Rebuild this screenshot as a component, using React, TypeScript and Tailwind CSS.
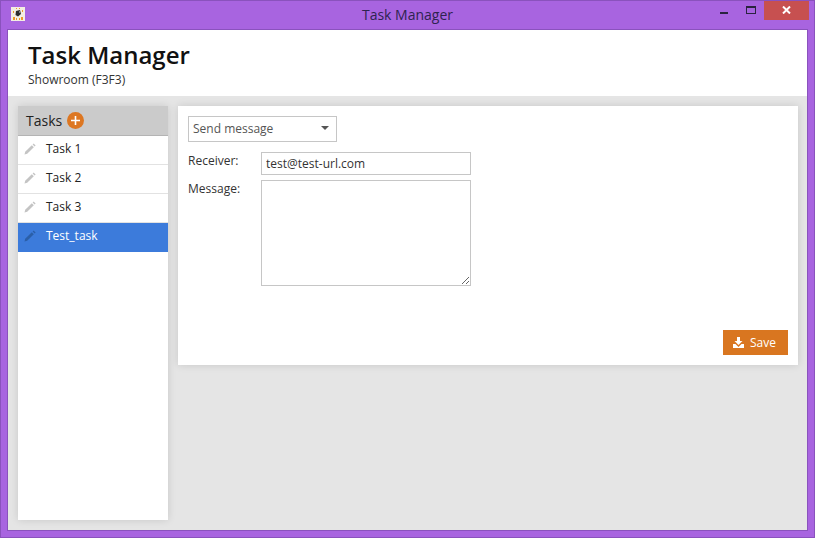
const tasks = ["Task 1", "Task 2", "Task 3", "Test_task"];

function PencilIcon({ dark }: { dark?: boolean }) {
  const c = dark ? "#2b5fa8" : "#c4c4c4";
  return (
    <svg width="12" height="12" viewBox="0 0 12 12" className="shrink-0">
      <path d="M0.5 11.5 L1.2 8.8 L7.8 2.2 L9.8 4.2 L3.2 10.8 Z" fill={c} />
      <path d="M8.6 1.4 L9.6 0.4 L11.6 2.4 L10.6 3.4 Z" fill={c} />
    </svg>
  );
}

function AppIcon() {
  return (
    <svg width="14" height="14" viewBox="0 0 14 14" className="absolute left-[10px] top-[6px]">
      <rect width="14" height="14" fill="#f3eee2" />
      <path d="M5 4 L9 3 L10 7 L7 9.5 L4.5 8 Z" fill="#2c2c2c" />
      <path d="M8 4 L9 5 L8 6 Z" fill="#d8d8d8" />
      <path d="M2 10 H4 V13 H2 Z M10 10 H12 V13 H10 Z M5 11 H6 V13 H5 Z M8 11 H9 V13 H8 Z M2 4 H3 V6 H2 Z M11 3 H12 V5 H11 Z M5 1 H6 V2 H5 Z M8 1 H9 V2 H8 Z" fill="#ec9a2a" />
    </svg>
  );
}

function TaskRow({ name, active }: { name: string; active: boolean }) {
  return (
    <div
      className={
        active
          ? "flex h-[29px] items-center gap-[10px] bg-[#3c7bdb] pl-[6px] pb-[3px] text-[12px] text-white"
          : "flex h-[29px] items-center gap-[10px] border-b border-[#e2e2e2] pl-[6px] pb-[2px] text-[12px] text-[#222]"
      }
    >
      <PencilIcon dark={active} />
      <span>{name}</span>
    </div>
  );
}

export default function App() {
  return (
    <div className="flex h-[538px] w-[815px] flex-col overflow-hidden border border-[#8a52bd] bg-[#a864e0] font-['Open_Sans',sans-serif]">
      {/* window title bar */}
      <div className="relative flex h-[28px] shrink-0 items-center justify-center pb-[1px] text-[14px] text-[#2e2350]">
        <span>Task Manager</span>
        <AppIcon />
        <div className="absolute right-[5px] top-[-1px] flex items-start">
          <div className="mr-[18px] mt-[12px] h-[2px] w-[8px] bg-[#2a2340]" />
          <div className="mr-[8px] mt-[6px] h-[8px] w-[10px] border border-t-2 border-[#2a2340]" />
          <div className="flex h-[20px] w-[45px] items-center justify-center bg-[#c75050]">
            <svg width="9" height="8" viewBox="0 0 9 8">
              <path d="M1 0.5 L8 7.5 M8 0.5 L1 7.5" stroke="#fff" strokeWidth="2" />
            </svg>
          </div>
        </div>
      </div>

      <div className="mx-[6px] flex min-h-0 flex-1 flex-col border border-[#8a52bd] bg-[#e5e5e5]">
        <header className="h-[66px] shrink-0 bg-white pl-[20px] pt-[10px] text-[#111]">
          <h1 className="text-[24px] leading-[30px] font-semibold">Task Manager</h1>
          <p className="mt-[3px] text-[12px] leading-[14px] text-[#333]">Showroom (F3F3)</p>
        </header>

        <div className="flex min-h-0 flex-1 items-start gap-[10px] py-[10px] pl-[10px] pr-[9px]">
          <aside className="flex h-[414px] w-[150px] shrink-0 flex-col bg-white shadow-[0_0_8px_rgba(0,0,0,0.13)]">
            <div className="flex h-[30px] items-center gap-[5px] border-b border-[#b4b4b4] bg-[#cbcbcb] pb-[1px] pl-[8px] text-[14px] text-[#222]">
              <span>Tasks</span>
              <span className="flex h-[17px] w-[17px] items-center justify-center rounded-full bg-[#dd7722]">
                <svg width="11" height="11" viewBox="0 0 11 11">
                  <path d="M5.5 1 V10 M1 5.5 H10" stroke="#fff" strokeWidth="1.6" />
                </svg>
              </span>
            </div>
            {tasks.map((t) => (
              <TaskRow key={t} name={t} active={t === "Test_task"} />
            ))}
          </aside>

          <main className="flex h-[259px] flex-1 flex-col bg-white p-[10px] shadow-[0_0_8px_rgba(0,0,0,0.13)]">
            <div className="flex h-[26px] w-[149px] items-center justify-between border border-[#c6c6c6] pl-[4px] pr-[7px] text-[12px] text-[#555]">
              <span>Send message</span>
              <span className="mb-[2px] h-0 w-0 border-x-[4px] border-t-[4px] border-x-transparent border-t-[#555]" />
            </div>

            <div className="mt-[10px] grid grid-cols-[73px_210px] gap-y-[5px] text-[12px] text-[#333]">
              <label className="leading-[18px]">Receiver:</label>
              <input
                readOnly
                value="test@test-url.com"
                className="h-[23px] border border-[#c6c6c6] px-[4px] text-[12px] text-[#333] outline-none"
              />
              <label className="leading-[18px]">Message:</label>
              <textarea readOnly className="h-[106px] border border-[#c6c6c6] outline-none" />
            </div>

            <div className="mt-auto flex justify-end">
              <button className="flex h-[25px] w-[65px] items-center justify-center gap-[6px] bg-[#d97620] pr-[2px] text-[12px] text-white">
                <svg width="11" height="11" viewBox="0 0 11 11">
                  <path d="M4 0 H7 V4 H9.5 L5.5 8 L1.5 4 H4 Z" fill="#fff" />
                  <path d="M0 7 H2.5 L5.5 10 L8.5 7 H11 V11 H0 Z" fill="#fff" />
                </svg>
                Save
              </button>
            </div>
          </main>
        </div>
      </div>
      <div className="h-[6px] shrink-0" />
    </div>
  );
}
